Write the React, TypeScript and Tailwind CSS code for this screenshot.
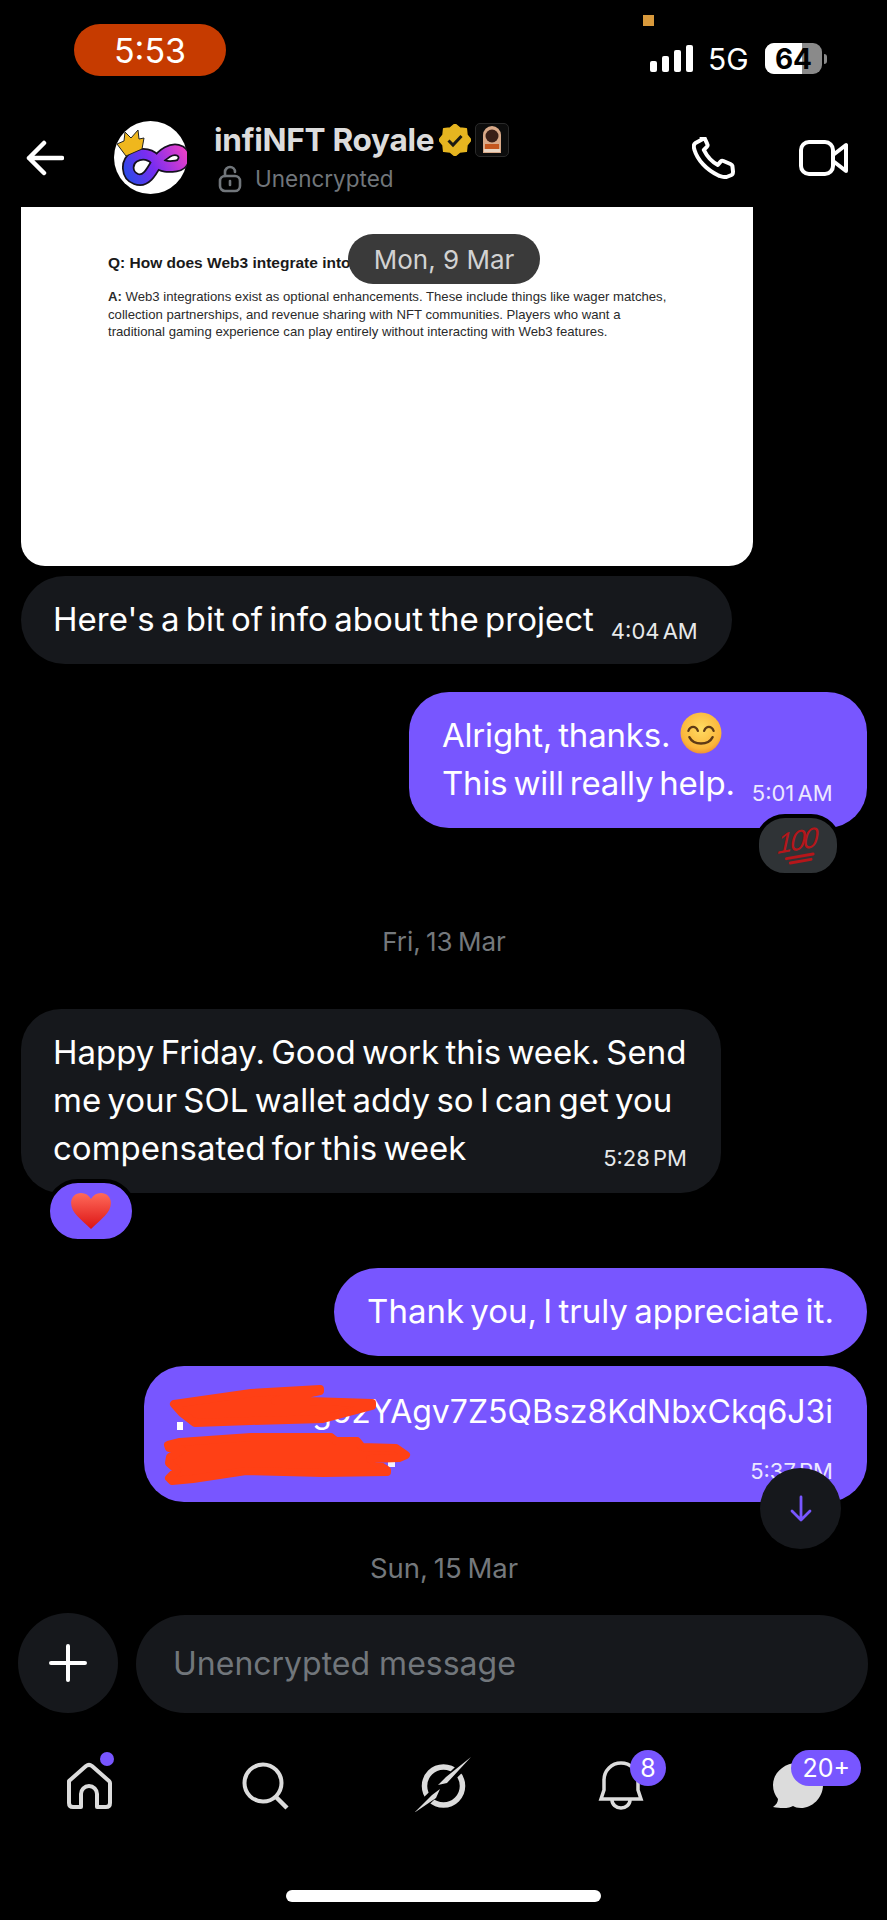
const SANS = "font-['Inter','Noto_Sans',sans-serif]";
const MSG = "text-[33px] [word-spacing:-3px] whitespace-nowrap";
const INF = "M43 41C38 33 28 31 20 36 12 41 12 54 22 58 32 62 38 50 43 41 48 33 58 26 66 30 73 34 70 44 62 45 54 46 48 46 43 41z";

function Signal() {
  return (
    <div className="flex items-end gap-[5px] h-[27px]">
      <span className="w-[7px] h-[11px] rounded-[2px] bg-white" />
      <span className="w-[7px] h-[16px] rounded-[2px] bg-white" />
      <span className="w-[7px] h-[22px] rounded-[2px] bg-white" />
      <span className="w-[7px] h-[27px] rounded-[2px] bg-white" />
    </div>
  );
}

function Battery() {
  return (
    <div className="flex items-center gap-[2px]">
      <div className="relative w-[57px] h-[31px] rounded-[9px] overflow-hidden bg-[#8a8a8a]">
        <div className="absolute inset-y-0 left-0 w-[37px] bg-white" />
        <span className="absolute inset-0 flex items-center justify-center text-[28px] font-bold leading-none text-black">
          64
        </span>
      </div>
      <span className="w-[3px] h-[10px] rounded-r-full bg-[#8a8a8a]" />
    </div>
  );
}

function Avatar() {
  return (
    <svg width="73" height="73" viewBox="0 0 73 73" className="shrink-0">
      <defs>
        <linearGradient id="inf" gradientUnits="userSpaceOnUse" x1="14" y1="60" x2="70" y2="28">
          <stop offset="0" stopColor="#2a4be8" />
          <stop offset="0.45" stopColor="#7a2df0" />
          <stop offset="1" stopColor="#e83fc8" />
        </linearGradient>
      </defs>
      <circle cx="36.5" cy="36.5" r="36.5" fill="#fff" />
      <path d={INF} fill="none" stroke="#15101f" strokeWidth="12.500" strokeLinejoin="round" />
      <path d={INF} fill="none" stroke="url(#inf)" strokeWidth="9" strokeLinejoin="round" />
      <path d="M3 23l7-3 1-9 6 6 7-8 1 9 5-1-2 11-16 7z" fill="#efb71d" stroke="#222" strokeWidth="1" />
    </svg>
  );
}

function Verified() {
  const points: string[] = [];
  for (let i = 0; i < 16; i++) {
    const r = i % 2 === 0 ? 16 : 13;
    const a = (i * Math.PI) / 8;
    points.push(`${16 + r * Math.cos(a)},${16 + r * Math.sin(a)}`);
  }
  return (
    <svg width="32" height="32" viewBox="0 0 32 32" className="shrink-0">
      <polygon points={points.join(" ")} fill="#e6b520" stroke="#e6b520" strokeWidth="1.500" strokeLinejoin="round" />
      <path d="M9.500 16.500l4.500 4.500 8.500-9" fill="none" stroke="#1c1a12" strokeWidth="3" />
    </svg>
  );
}

function NftBadge() {
  return (
    <div className="w-[34px] h-[34px] ml-[4px] shrink-0 rounded-[5px] border border-[#2a2a2a] bg-[#0c0c0c] flex items-center justify-center">
      <svg width="20" height="28" viewBox="0 0 20 28">
        <path d="M1 27V9a9 9 0 0 1 18 0v18z" fill="#d9a988" />
        <circle cx="10" cy="10" r="6.500" fill="#3a2018" />
        <rect x="3" y="18" width="14" height="5" fill="#c4561e" />
        <rect x="2" y="23" width="16" height="3" fill="#e9d6c4" />
      </svg>
    </div>
  );
}

function SmileEmoji() {
  return (
    <svg width="42" height="42" viewBox="0 0 40 40" className="inline-block align-[-7px] ml-[4px]">
      <defs>
        <radialGradient id="smile" cx="0.5" cy="0.4" r="0.65">
          <stop offset="0" stopColor="#ffdc62" />
          <stop offset="0.75" stopColor="#fbb53a" />
          <stop offset="1" stopColor="#ec8430" />
        </radialGradient>
      </defs>
      <circle cx="20" cy="20" r="19.500" fill="url(#smile)" />
      <path d="M8 18c2-5 7-5 9 0M23 18c2-5 7-5 9 0" fill="none" stroke="#5f3a15" strokeWidth="2.200" strokeLinecap="round" />
      <path d="M9 24c4 8 18 8 22 0" fill="none" stroke="#5f3a15" strokeWidth="2.400" strokeLinecap="round" />
    </svg>
  );
}

function HeartEmoji() {
  return (
    <svg width="42" height="38" viewBox="0 0 38 38" preserveAspectRatio="none">
      <defs>
        <linearGradient id="heart" x1="0" y1="0" x2="0" y2="1">
          <stop offset="0" stopColor="#ff6a5a" />
          <stop offset="1" stopColor="#dc1414" />
        </linearGradient>
      </defs>
      <path d="M19 37C10 27 1 21 1 11 1 5 5 1 10 1c4 0 7 2 9 6 2-4 5-6 9-6 5 0 9 4 9 10 0 10-9 16-18 26z" fill="url(#heart)" />
    </svg>
  );
}

function Hundred() {
  return (
    <div className="flex flex-col items-center -rotate-[10deg] text-[#b5161a]">
      <span className="text-[28px] leading-[24px] italic tracking-[-2.5px] -skew-x-[12deg] font-['Liberation_Sans',sans-serif]">100</span>
      <span className="w-[30px] h-[3px] mt-[2px] bg-[#b5161a] rounded-full" />
      <span className="w-[24px] h-[3px] mt-[2px] bg-[#b5161a] rounded-full" />
    </div>
  );
}

function Scribble() {
  return (
    <svg className="absolute inset-0" width="723" height="136" viewBox="0 0 723 136">
      <rect x="33" y="56" width="6" height="8" fill="#fff" />
      <rect x="34" y="90" width="6" height="7" fill="#fff" />
      <rect x="244" y="92" width="7" height="9" fill="#f4f0ff" />
      <g fill="#ff4015" stroke="#ff4015" strokeWidth="8" strokeLinejoin="round">
        <path d="M30 38L107 27 176 23 176 25 131 35 165 35 228 37 228 40 179 53 107 55 51 57 38 47z" />
        <path d="M24 79L36 76 107 71 187 71 192 75 213 75 218 81 252 82 262 89 255 92 226 93 243 104 243 106 179 107 102 105 49 113 28 115 25 112 33 104 25 97 26 91 38 84 25 82z" />
      </g>
    </svg>
  );
}

function Time({ children, className = "" }: { children: string; className?: string }) {
  return <span className={`text-[22px] leading-none [word-spacing:-3px] whitespace-nowrap ${className}`}>{children}</span>;
}

function DateLabel({ children, className = "" }: { children: string; className?: string }) {
  return <div className={`h-[30px] text-center [word-spacing:-2px] leading-[30px] text-[#74787c] ${className}`}>{children}</div>;
}

function PdfCard() {
  return (
    <div className="relative w-[732px] h-[359px] rounded-b-[24px] bg-white pl-[87px] pt-[47px] font-['Liberation_Sans',sans-serif] text-[#2a2a2a]">
      <p className="text-[15.500px] leading-[18px] font-bold text-[#1a1a1a] whitespace-nowrap">Q: How does Web3 integrate into</p>
      <p className="mt-[16px] text-[13.150px] leading-[17.500px] whitespace-nowrap">
        <b>A:</b> Web3 integrations exist as optional enhancements. These include things like wager matches,
        <br />
        collection partnerships, and revenue sharing with NFT communities. Players who want a
        <br />
        traditional gaming experience can play entirely without interacting with Web3 features.
      </p>
      <div className={`absolute left-[327px] top-[27px] w-[192px] h-[50px] rounded-full bg-[#3a3a3a] flex items-center justify-center text-[26px] text-[#d2d2d2] ${SANS}`}>
        Mon, 9 Mar
      </div>
    </div>
  );
}

function NavIcon({ children }: { children: React.ReactNode }) {
  return <div className="relative w-[60px] h-[60px]">{children}</div>;
}

export default function App() {
  return (
    <div className={`relative w-[887px] h-[1920px] overflow-hidden bg-black text-white flex flex-col ${SANS}`}>
      {/* status bar */}
      <div className="relative h-[108px] shrink-0 flex justify-between pl-[74px] pr-[60px] pt-[24px]">
        <div className="w-[152px] h-[52px] rounded-full bg-[#c63b00] flex items-center justify-center text-[34px]">
          5:53
        </div>
        <div className="flex items-center h-[31px] mt-[19px] gap-[15px]">
          <Signal />
          <span className="text-[30px] leading-none w-[42px]">5G</span>
          <Battery />
        </div>
        <span className="absolute left-[643px] top-[15px] w-[11px] h-[11px] bg-[#d99a3c]" />
      </div>

      {/* header */}
      <div className="h-[99px] shrink-0 flex items-center pl-[26px] pr-[39px]">
        <svg width="38" height="36" viewBox="0 0 38 36" fill="none" stroke="#fff" strokeWidth="4.500" strokeLinecap="round" strokeLinejoin="round">
          <path d="M36 18H3M18 3L3 18l15 15" />
        </svg>
        <div className="ml-[50px] -mt-[1px]">
          <Avatar />
        </div>
        <div className="ml-[27px] flex flex-col">
          <div className="flex items-center h-[38px] -mt-[1px]">
            <span className="text-[31.600px] leading-none font-bold text-[#dcdcdc] tracking-[-0.3px]">infiNFT Royale</span>
            <span className="ml-[5px]"><Verified /></span>
            <NftBadge />
          </div>
          <div className="flex items-center mt-[6px] ml-[4px] h-[28px]">
            <svg width="24" height="28" viewBox="0 0 24 28" fill="none" stroke="#71767b" strokeWidth="2.600">
              <path d="M7 11V7a5 5 0 0 1 10 0" strokeLinecap="round" />
              <rect x="2" y="11" width="20" height="15" rx="5" />
              <path d="M12 16v4" strokeLinecap="round" />
            </svg>
            <span className="ml-[13px] text-[22.500px] leading-none text-[#71767b]">Unencrypted</span>
          </div>
        </div>
        <div className="ml-auto flex items-center gap-[64px]">
          <svg width="43" height="42" viewBox="0 0 43 42" fill="none" stroke="#fff" strokeWidth="4" strokeLinejoin="round">
            <path d="M10 2.500L3.500 6c-2 1.200-2 4-1 7 3 10 12 20 24 25.500 3 1 5.500 2 8 1.500l5-2c1.500-.6 1.500-2 1.500-3.500l-.6-5.500c-.2-1-1-1.500-2-2l-7-3c-1-.4-2-.2-2.600.4l-3 3.500c-6-3-11-9-14-15l3-3c.8-.8 1-1.800.5-2.800l-3-6.600c-.5-1-1.600-1.500-2.800-1z" />
          </svg>
          <svg width="49" height="36" viewBox="0 0 49 36" fill="none" stroke="#fff" strokeWidth="4" strokeLinejoin="round">
            <rect x="2" y="2" width="32" height="32" rx="8" />
            <path d="M34 15L47 5v26L34 21z" />
          </svg>
        </div>
      </div>

      {/* chat */}
      <div className="relative h-[1406px] shrink-0 flex flex-col pl-[21px] pr-[20px]">
        <PdfCard />

        <div className="mt-[10px] w-[711px] h-[88px] rounded-[44px] bg-[#16181c] pl-[32px] flex items-center">
          <span className={`${MSG} leading-none -translate-y-[1px]`}>Here's a bit of info about the project</span>
          <Time className="ml-[17px] translate-y-[11px] text-[#e7e9ea]">4:04 AM</Time>
        </div>

        <div className="relative self-end mt-[28px] w-[458px] h-[136px] rounded-[40px] bg-[#7856ff] pl-[33px] pt-[19px]">
          <div className={`${MSG} leading-[48px] tracking-[-0.2px]`}>
            <div>
              Alright, thanks. <SmileEmoji />
            </div>
            <div className="flex items-baseline">
              This will really help.
              <Time className="ml-[17px] translate-y-[6px] tracking-normal text-[#ece8ff]">5:01 AM</Time>
            </div>
          </div>
          <div className="absolute right-[26px] top-[122px] w-[86px] h-[63px] rounded-[30px] border-[4px] border-black bg-[#2f3336] flex items-center justify-center">
            <Hundred />
          </div>
        </div>

        <DateLabel className="mt-[99px] text-[26px]">Fri, 13 Mar</DateLabel>

        <div className="relative mt-[52px] w-[700px] h-[184px] rounded-[40px] bg-[#16181c] pl-[32px] pt-[19px]">
          <div className={`${MSG} leading-[48px]`}>
            Happy Friday. Good work this week. Send
            <br />
            me your SOL wallet addy so I can get you
            <br />
            <span className="flex items-baseline justify-between pr-[34px]">
              compensated for this week
              <Time className="translate-y-[6px] text-[#e7e9ea]">5:28 PM</Time>
            </span>
          </div>
          <div className="absolute left-[25px] top-[170px] w-[90px] h-[64px] rounded-[32px] border-[4px] border-black bg-[#7856ff] flex items-center justify-center">
            <HeartEmoji />
          </div>
        </div>

        <div className="self-end mt-[75px] w-[533px] h-[88px] rounded-[44px] bg-[#7856ff] flex items-center justify-center">
          <span className={`${MSG} leading-none -translate-y-[1px]`}>Thank you, I truly appreciate it.</span>
        </div>

        <div className="relative self-end mt-[10px] w-[723px] h-[136px] rounded-[40px] bg-[#7856ff] pr-[34px] pt-[22px] flex flex-col items-end">
          <span className="text-[32px] leading-[48px] whitespace-nowrap">g52YAgv7Z5QBsz8KdNbxCkq6J3i</span>
          <Time className="mt-[24px] text-[#ece8ff]">5:37 PM</Time>
          <Scribble />
        </div>

        <DateLabel className="mt-[51px] text-[27.500px]">Sun, 15 Mar</DateLabel>

        <div className="absolute left-[760px] top-[1261px] w-[81px] h-[81px] rounded-full bg-[#16181c] flex items-center justify-center">
          <svg width="24" height="28" viewBox="0 0 24 28" fill="none" stroke="#7856ff" strokeWidth="2.800" strokeLinecap="round" strokeLinejoin="round">
            <path d="M12 2v23M3 16l9 9 9-9" />
          </svg>
        </div>
      </div>

      {/* composer */}
      <div className="h-[100px] shrink-0 flex items-center pl-[18px] pr-[19px] gap-[18px]">
        <div className="w-[100px] h-[100px] shrink-0 rounded-full bg-[#16181c] flex items-center justify-center">
          <svg width="38" height="38" viewBox="0 0 38 38" stroke="#fff" strokeWidth="4" strokeLinecap="round">
            <path d="M19 2v34M2 19h34" />
          </svg>
        </div>
        <div className="flex-1 h-[98px] mt-[2px] rounded-full bg-[#16181c] pl-[37px] flex items-center text-[32px] text-[#71767b]">
          Unencrypted message
        </div>
      </div>

      {/* bottom nav */}
      <div className="grid grid-cols-5 justify-items-center mt-[39px]">
        <NavIcon>
          <svg width="60" height="60" viewBox="0 0 60 60" fill="none" stroke="#dcdcdc" strokeWidth="4" strokeLinejoin="round">
            <path d="M10 29L27 14c2-1.500 4-1.500 6 0l17 15c.6.6 1 1.200 1 2v20c0 2.500-1.500 4-4 4H38V42a8 8 0 0 0-16 0v13H14c-2.500 0-4-1.500-4-4V31c0-.8 0-1.400 0-2z" />
          </svg>
          <span className="absolute left-[41px] top-0 w-[14px] h-[14px] rounded-full bg-[#7856ff]" />
        </NavIcon>
        <NavIcon>
          <svg width="60" height="60" viewBox="0 0 60 60" fill="none" stroke="#dcdcdc" strokeWidth="4">
            <circle cx="27" cy="31" r="18.500" />
            <path d="M40 45l11 11" strokeWidth="4.500" />
          </svg>
        </NavIcon>
        <NavIcon>
          <svg width="60" height="60" viewBox="0 0 60 60">
            <circle cx="30.500" cy="34" r="19" fill="none" stroke="#dcdcdc" strokeWidth="5.500" />
            <path d="M62 2L-2 64" stroke="#000" strokeWidth="9" />
            <path d="M58 5L33 25l-8 8 9-2zM27 37l-8 6-18 18 22-15z" fill="#dcdcdc" />
          </svg>
        </NavIcon>
        <NavIcon>
          <svg width="60" height="60" viewBox="0 0 60 60" fill="none" stroke="#dcdcdc" strokeWidth="3.500">
            <path d="M10 47l3-9V28a17 17 0 0 1 34 0v10l3 9z" strokeLinejoin="miter" />
            <path d="M21 48a9 8 0 0 0 18 0" />
          </svg>
          <span className="absolute left-[39px] -top-[2px] w-[36px] h-[36px] rounded-full bg-[#7856ff] flex items-center justify-center text-[25px] leading-none">
            8
          </span>
        </NavIcon>
        <NavIcon>
          <svg width="60" height="60" viewBox="0 0 60 60">
            <path d="M29 11a25 22 0 0 1 26 22c0 13-11 23-22 23-4 0-6-1-8-2-3 2-10 3-20 1 3-2 5-5 5-8-3-4-5-8-5-14 0-12 11-22 24-22z" fill="#dcdcdc" />
          </svg>
          <span className="absolute left-[23px] -top-[2px] w-[70px] h-[36px] rounded-full bg-[#7856ff] flex items-center justify-center text-[25px] leading-none">
            20+
          </span>
        </NavIcon>
      </div>

      {/* home indicator */}
      <div className="absolute left-[286px] top-[1890px] w-[315px] h-[12px] rounded-full bg-white" />
    </div>
  );
}
